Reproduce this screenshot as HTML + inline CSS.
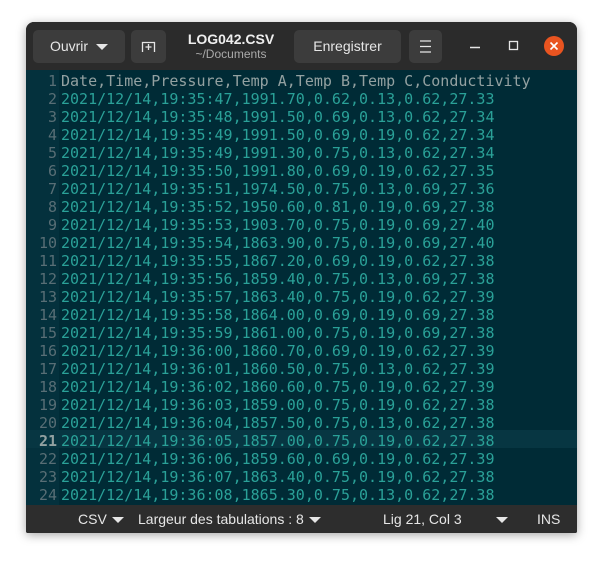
<!DOCTYPE html>
<html><head><meta charset="utf-8"><style>
*{margin:0;padding:0;box-sizing:border-box}
body{width:603px;height:562px;background:#fff;position:relative;overflow:hidden;font-family:"Liberation Sans",sans-serif}
.win{position:absolute;left:26px;top:22px;width:551px;height:511px;background:#2b2b2b;border-radius:8px 8px 2px 2px;overflow:hidden;box-shadow:0 2px 10px rgba(0,0,0,.35)}
.hdr{position:absolute;left:0;top:0;width:551px;height:48px;background:#2b2b2b}
.btn{position:absolute;top:8px;height:33px;background:#3c3c3c;border-radius:5px;color:#e6e6e6;font-size:14px;line-height:33px;text-align:center}
.tri{display:inline-block;width:0;height:0;border-left:6px solid transparent;border-right:6px solid transparent;border-top:6px solid #e6e6e6;vertical-align:middle;margin-left:8px}
.title{position:absolute;left:150px;width:110px;top:9px;text-align:center;color:#eee;font-weight:bold;font-size:14px;line-height:16px}
.sub{font-weight:normal;font-size:12px;color:#aaa;line-height:14px}
.ed{position:absolute;left:0;top:48px;width:551px;height:435px;background:#002b36}
.gut{position:absolute;left:0;top:0;width:33px;height:435px;background:#04313d}
.cur{position:absolute;left:0;top:360px;width:551px;height:18px;background:#073642}
.lines{position:absolute;left:0;top:2px;font-family:"DejaVu Sans Mono",monospace;font-size:15px;line-height:18px;white-space:pre}
.ln{display:inline-block;width:31px;text-align:right;color:#586e75;margin-right:4px}
.t{color:#2aa198}
.h{color:#93a1a1}
.sb{position:absolute;left:0;top:483px;width:551px;height:28px;background:#2d2d2d;color:#e6e6e6;font-size:14px;line-height:28px}
.sb span{position:absolute;top:0}
.stri{display:inline-block;width:0;height:0;border-left:6px solid transparent;border-right:6px solid transparent;border-top:6px solid #e6e6e6;vertical-align:middle;margin-left:5px}
</style></head><body>
<div class="win">
<div class="hdr">
<div class="btn" style="left:7px;width:92px">Ouvrir<span class="tri"></span></div>
<div class="btn" style="left:105px;width:35px"><svg width="35" height="33" viewBox="0 0 35 33"><path d="M11.5 22V12.5h12V22M17.5 14v6M14.5 17h6" stroke="#e6e6e6" stroke-width="1.3" fill="none"/></svg></div>
<div class="title">LOG042.CSV<div class="sub">~/Documents</div></div>
<div class="btn" style="left:268px;width:107px">Enregistrer</div>
<div class="btn" style="left:383px;width:33px"><svg width="33" height="33"><path d="M11 11h11M11 16.5h11M11 22h11" stroke="#e6e6e6" stroke-width="1.2"/></svg></div>
<svg style="position:absolute;left:440px;top:14px" width="110" height="22"><path d="M4 11.5h10" stroke="#e6e6e6" stroke-width="1.5"/><rect x="43.5" y="5.5" width="8" height="8" stroke="#e6e6e6" stroke-width="1.3" fill="none"/><circle cx="88" cy="10" r="10" fill="#e95420"/><path d="M84.5 6.5l7 7M91.5 6.5l-7 7" stroke="#fff" stroke-width="1.6"/></svg>
</div>
<div class="ed"><div class="gut"></div><div class="cur"></div>
<div class="lines"><span class="ln">1</span><span class="h">Date,Time,Pressure,Temp A,Temp B,Temp C,Conductivity</span>
<span class="ln">2</span><span class="t">2021/12/14,19:35:47,1991.70,0.62,0.13,0.62,27.33</span>
<span class="ln">3</span><span class="t">2021/12/14,19:35:48,1991.50,0.69,0.13,0.62,27.34</span>
<span class="ln">4</span><span class="t">2021/12/14,19:35:49,1991.50,0.69,0.19,0.62,27.34</span>
<span class="ln">5</span><span class="t">2021/12/14,19:35:49,1991.30,0.75,0.13,0.62,27.34</span>
<span class="ln">6</span><span class="t">2021/12/14,19:35:50,1991.80,0.69,0.19,0.62,27.35</span>
<span class="ln">7</span><span class="t">2021/12/14,19:35:51,1974.50,0.75,0.13,0.69,27.36</span>
<span class="ln">8</span><span class="t">2021/12/14,19:35:52,1950.60,0.81,0.19,0.69,27.38</span>
<span class="ln">9</span><span class="t">2021/12/14,19:35:53,1903.70,0.75,0.19,0.69,27.40</span>
<span class="ln">10</span><span class="t">2021/12/14,19:35:54,1863.90,0.75,0.19,0.69,27.40</span>
<span class="ln">11</span><span class="t">2021/12/14,19:35:55,1867.20,0.69,0.19,0.62,27.38</span>
<span class="ln">12</span><span class="t">2021/12/14,19:35:56,1859.40,0.75,0.13,0.69,27.38</span>
<span class="ln">13</span><span class="t">2021/12/14,19:35:57,1863.40,0.75,0.19,0.62,27.39</span>
<span class="ln">14</span><span class="t">2021/12/14,19:35:58,1864.00,0.69,0.19,0.69,27.38</span>
<span class="ln">15</span><span class="t">2021/12/14,19:35:59,1861.00,0.75,0.19,0.69,27.38</span>
<span class="ln">16</span><span class="t">2021/12/14,19:36:00,1860.70,0.69,0.19,0.62,27.39</span>
<span class="ln">17</span><span class="t">2021/12/14,19:36:01,1860.50,0.75,0.13,0.62,27.39</span>
<span class="ln">18</span><span class="t">2021/12/14,19:36:02,1860.60,0.75,0.19,0.62,27.39</span>
<span class="ln">19</span><span class="t">2021/12/14,19:36:03,1859.00,0.75,0.19,0.62,27.38</span>
<span class="ln">20</span><span class="t">2021/12/14,19:36:04,1857.50,0.75,0.13,0.62,27.38</span>
<span class="ln" style="color:#93a1a1;font-weight:bold">21</span><span class="t">2021/12/14,19:36:05,1857.00,0.75,0.19,0.62,27.38</span>
<span class="ln">22</span><span class="t">2021/12/14,19:36:06,1859.60,0.69,0.19,0.62,27.39</span>
<span class="ln">23</span><span class="t">2021/12/14,19:36:07,1863.40,0.75,0.19,0.62,27.38</span>
<span class="ln">24</span><span class="t">2021/12/14,19:36:08,1865.30,0.75,0.13,0.62,27.38</span></div>
</div>
<div class="sb"><span style="left:52px">CSV<i class="stri"></i></span><span style="left:112px">Largeur des tabulations : 8<i class="stri"></i></span><span style="left:357px">Lig 21, Col 3</span><span style="left:465px"><i class="stri"></i></span><span style="left:511px">INS</span></div>
</div>
</body></html>
